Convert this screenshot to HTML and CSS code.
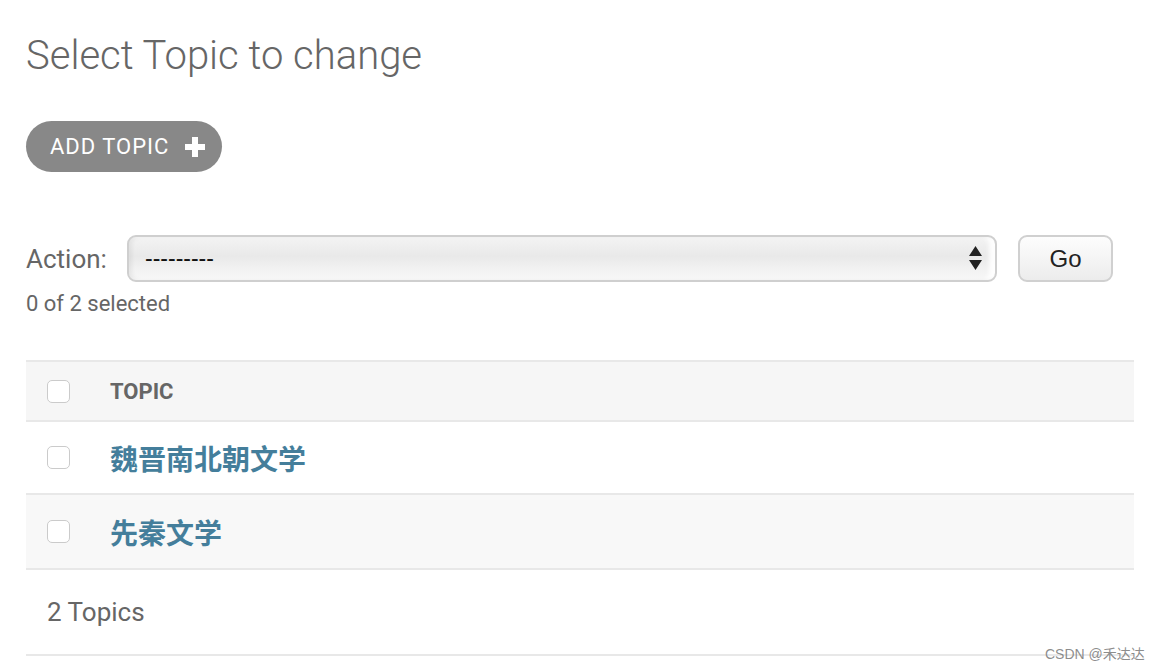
FILE: index.html
```html
<!DOCTYPE html>
<html lang="en">
<head>
<meta charset="utf-8">
<title>Select Topic to change</title>
<link rel="stylesheet" href="styles.css">
</head>
<body>
<div class="content">
  <h1 class="title">Select Topic to change</h1>
  <div class="object-tools">
    <a class="addlink" href="#">ADD TOPIC
      <svg class="plus" width="20" height="20" viewBox="0 0 20 20"><path d="M7 0h6v7h7v6h-7v7H7v-7H0V7h7z" fill="#fff"/></svg>
    </a>
  </div>
  <div class="actions">
    <label class="action-label">Action:</label>
    <div class="select-wrap">
      <div class="select">---------</div>
      <svg class="arrows" width="15" height="26" viewBox="0 0 15 26"><path d="M7.5 1L14 11H1z M1 15h13L7.5 25z" fill="#222"/></svg>
    </div>
    <button class="go">Go</button>
  </div>
  <div class="counter">0 of 2 selected</div>
  <table class="result-list">
    <thead>
      <tr class="head-row">
        <th class="check-col"><span class="checkbox"></span></th>
        <th class="topic-col">TOPIC</th>
      </tr>
    </thead>
    <tbody>
      <tr class="row1">
        <td class="check-col"><span class="checkbox"></span></td>
        <th class="topic-col"><a class="topic-link" href="#">魏晋南北朝文学</a></th>
      </tr>
      <tr class="row2">
        <td class="check-col"><span class="checkbox"></span></td>
        <th class="topic-col"><a class="topic-link" href="#">先秦文学</a></th>
      </tr>
    </tbody>
  </table>
  <p class="paginator">2 Topics</p>
</div>
<div class="watermark">CSDN @禾达达</div>
</body>
</html>
```
FILE: styles.css
```css
html, body {
  margin: 0;
  padding: 0;
  background: #fff;
}
body {
  font-family: Roboto, "Noto Sans CJK SC", sans-serif;
  color: #666;
  position: relative;
  width: 1160px;
  height: 670px;
  overflow: hidden;
}
.content {
  padding: 0 26px;
}
.title {
  margin: 32px 0 0;
  font-size: 40px;
  font-weight: 300;
  line-height: 48px;
  color: #666;
}
.object-tools {
  margin-top: 41px;
  display: flex;
}
.addlink {
  display: flex;
  align-items: center;
  height: 51px;
  box-sizing: border-box;
  padding: 0 17px 1px 24px;
  border-radius: 26px;
  background: #888;
  color: #fff;
  text-decoration: none;
  font-size: 22px;
  letter-spacing: 1px;
  gap: 16px;
}
.plus {
  display: block;
  margin-top: 1px;
}
.actions {
  margin-top: 63px;
  display: flex;
  align-items: center;
  height: 47px;
}
.action-label {
  font-size: 26px;
  color: #666;
  width: 101px;
}
.select-wrap {
  position: relative;
  width: 870px;
  height: 47px;
}
.select {
  box-sizing: border-box;
  width: 100%;
  height: 100%;
  border: 2px solid #cfcfcf;
  border-radius: 9px;
  background: linear-gradient(#f3f3f3 0%, #e9e9e9 45%, #f2f2f2 75%, #f7f7f7 100%);
  box-shadow: inset 3px 0 4px rgba(0,0,0,0.06), inset -6px 0 4px rgba(255,255,255,0.9);
  font-family: "Liberation Sans", Arial, sans-serif;
  font-size: 23px;
  color: #111;
  padding: 0 0 0 16px;
  display: flex;
  align-items: center;
}
.arrows {
  position: absolute;
  right: 14px;
  top: 10px;
}
.go {
  margin-left: 21px;
  box-sizing: border-box;
  width: 95px;
  height: 47px;
  border: 2px solid #d0d0d0;
  border-radius: 9px;
  background: linear-gradient(#fdfdfd, #f3f3f3 60%, #ececec);
  font-family: "Liberation Sans", Arial, sans-serif;
  font-size: 24px;
  color: #222;
  padding: 0;
}
.counter {
  margin-top: 10px;
  font-size: 22px;
  line-height: 24px;
  color: #666;
}
.result-list {
  margin-top: 44px;
  width: 1108px;
  border-collapse: collapse;
}
.result-list tr {
  border-top: 2px solid #e8e8e8;
}
.result-list tbody tr:last-child {
  border-bottom: 2px solid #e8e8e8;
}
.head-row {
  background: #f6f6f6;
}
.head-row th {
  height: 58px;
}
.row1 td, .row1 th {
  height: 71px;
  background: #fff;
}
.row2 td, .row2 th {
  height: 73px;
  background: #f8f8f8;
}
.check-col {
  width: 63px;
  padding: 0 0 0 21px;
  vertical-align: middle;
  text-align: left;
}
.topic-col {
  padding: 0;
  text-align: left;
  vertical-align: middle;
}
.head-row .topic-col {
  font-size: 22px;
  font-weight: 700;
  color: #666;
}
.checkbox {
  display: block;
  box-sizing: border-box;
  width: 23px;
  height: 23px;
  border: 1.5px solid #cbcbcb;
  border-radius: 5px;
  background: #fff;
}
.topic-link {
  font-size: 28px;
  font-weight: 700;
  color: #447e9b;
  text-decoration: none;
}
.paginator {
  margin: 0;
  box-sizing: border-box;
  border-bottom: 2px solid #e8e8e8;
  padding-left: 21px;
  display: flex;
  align-items: center;
  font-size: 26px;
  color: #666;
  height: 86px;
}
.watermark {
  position: absolute;
  left: 1045px;
  top: 644px;
  font-family: "Liberation Sans", "Noto Sans CJK SC", sans-serif;
  font-size: 14px;
  line-height: 20px;
  color: rgba(120,120,120,0.85);
}
```
